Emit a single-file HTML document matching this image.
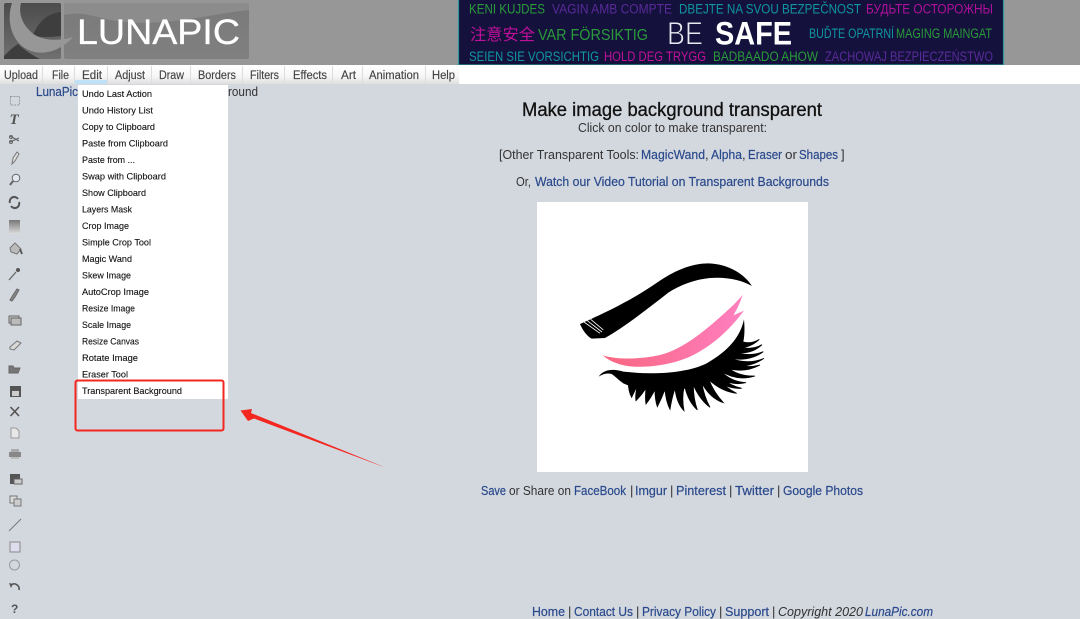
<!DOCTYPE html>
<html><head><meta charset="utf-8"><title>LunaPic</title>
<style>
html,body{margin:0;padding:0;width:1080px;height:619px;overflow:hidden;background:#d3d7de}
svg{display:block;filter:blur(.35px)}
text{font-family:"Liberation Sans","Noto Sans CJK SC",sans-serif}
.m{font-size:11.500px;fill:#444;stroke:#444;stroke-width:.15px}
.d{font-size:9.500px;fill:#111;stroke:#111;stroke-width:.12px}
.b{font-size:13px;fill:#333}
.l{fill:#2a4a8c;stroke:#2a4a8c;stroke-width:.2px}
</style></head><body>
<svg width="1080" height="619" viewBox="0 0 1080 619" xmlns="http://www.w3.org/2000/svg">
<defs>
<linearGradient id="mb" x1="0" y1="0" x2="0" y2="1"><stop offset="0" stop-color="#fff"/><stop offset=".6" stop-color="#f6f6f6"/><stop offset="1" stop-color="#dedede"/></linearGradient>
<linearGradient id="lg" x1="0" y1="0" x2="0" y2="1"><stop offset="0" stop-color="#7a7a7a"/><stop offset="1" stop-color="#808080"/></linearGradient>
<linearGradient id="sq" x1="0" y1="0" x2="0" y2="1"><stop offset="0" stop-color="#4c4c4c"/><stop offset="1" stop-color="#707070"/></linearGradient>
<linearGradient id="grad" x1="0" y1="0" x2="0" y2="1"><stop offset="0" stop-color="#777"/><stop offset=".5" stop-color="#aaa"/><stop offset="1" stop-color="#ddd"/></linearGradient>
<linearGradient id="pk" x1="0" y1="0" x2="1" y2="0"><stop offset="0" stop-color="#f9667f"/><stop offset="1" stop-color="#ff7fc0"/></linearGradient>
</defs>
<rect width="1080" height="619" fill="#d3d7de"/>
<!-- header -->
<rect width="1080" height="65" fill="#979797"/>
<rect x="4" y="3" width="57" height="56" rx="2" fill="url(#sq)"/>
<path d="M61 12C48 13 38 22 33 35C40 38 50 37 61 36Z" fill="#3e3e3e"/>
<path d="M4 56V59H40C30 54 22 48 18 44C13 47 8 52 4 56Z" fill="#3e3e3e"/>
<rect x="64" y="3" width="185" height="56" rx="2" fill="url(#lg)"/>
<path d="M64 15C85 10 100 20 125 22C170 26 210 14 249 10V3H64Z" fill="#8c8c8c"/>
<path d="M12 3C7 18 10 36 22 46C34 56 56 56 73 37C60 41 45 41 35 35C23 27 18 14 21 3Z" fill="#979797"/>
<text x="77" y="44" font-size="35" fill="#fff" stroke="#fff" stroke-width=".3" textLength="163" lengthAdjust="spacingAndGlyphs">LUNAPIC</text>
<!-- banner -->
<rect x="458.500" y="-2" width="545" height="67" fill="#14123c" stroke="#2a9aa0" stroke-width="1.200"/>
<g font-size="13.500">
<text x="469" y="13.500" fill="#2a9a3a" textLength="76" lengthAdjust="spacingAndGlyphs">KENI KUJDES</text>
<text x="552" y="13.500" fill="#5a2a9a" textLength="120" lengthAdjust="spacingAndGlyphs">VAGIN AMB COMPTE</text>
<text x="679" y="13.500" fill="#0f96a0" textLength="182" lengthAdjust="spacingAndGlyphs">DBEJTE NA SVOU BEZPEČNOST</text>
<text x="866" y="13.500" fill="#b0109a" textLength="127" lengthAdjust="spacingAndGlyphs">БУДЬТЕ ОСТОРОЖНЫ</text>
<text x="470" y="40" font-size="16" fill="#c0109a" textLength="65" lengthAdjust="spacingAndGlyphs">注意安全</text>
<text x="538" y="40" font-size="16" fill="#2a9a3a" textLength="110" lengthAdjust="spacingAndGlyphs">VAR FÖRSIKTIG</text>
<text x="667" y="44.500" font-size="32" fill="#e8e8f0" stroke="#14123c" stroke-width=".9" textLength="36" lengthAdjust="spacingAndGlyphs">BE</text>
<text x="715" y="44.500" font-size="32" fill="#fff" font-weight="700" textLength="77" lengthAdjust="spacingAndGlyphs">SAFE</text>
<text x="809" y="38" fill="#0f96a0" textLength="85" lengthAdjust="spacingAndGlyphs">BUĎTE OPATRNÍ</text>
<text x="896" y="38" fill="#2a9a3a" textLength="96" lengthAdjust="spacingAndGlyphs">MAGING MAINGAT</text>
<text x="469" y="61" fill="#0f96a0" textLength="130" lengthAdjust="spacingAndGlyphs">SEIEN SIE VORSICHTIG</text>
<text x="604" y="61" fill="#c0109a" textLength="102" lengthAdjust="spacingAndGlyphs">HOLD DEG TRYGG</text>
<text x="713" y="61" fill="#2a9a3a" textLength="105" lengthAdjust="spacingAndGlyphs">BADBAADO AHOW</text>
<text x="825" y="61" fill="#5a2a9a" textLength="168" lengthAdjust="spacingAndGlyphs">ZACHOWAJ BEZPIECZEŃSTWO</text>
</g>
<!-- menu bar -->
<rect y="65" width="1080" height="19" fill="#fff"/>
<rect x="0" y="66" width="459" height="18" fill="url(#mb)"/>
<rect x="75" y="80" width="32" height="4" fill="#bfe0f5"/>
<g stroke="#ddd" stroke-width="1"><path d="M42.500 66V84M74.500 66V84M107.500 66V84M151.500 66V84M190.500 66V84M242.500 66V84M284.500 66V84M332.500 66V84M362.500 66V84M425.500 66V84"/></g>
<g>
<text class="m" x="4" y="79" textLength="34" lengthAdjust="spacingAndGlyphs">Upload</text>
<text class="m" x="52" y="79" textLength="17" lengthAdjust="spacingAndGlyphs">File</text>
<text class="m" x="82" y="79" textLength="20" lengthAdjust="spacingAndGlyphs">Edit</text>
<text class="m" x="115" y="79" textLength="30" lengthAdjust="spacingAndGlyphs">Adjust</text>
<text class="m" x="159" y="79" textLength="25" lengthAdjust="spacingAndGlyphs">Draw</text>
<text class="m" x="198" y="79" textLength="38" lengthAdjust="spacingAndGlyphs">Borders</text>
<text class="m" x="250" y="79" textLength="29" lengthAdjust="spacingAndGlyphs">Filters</text>
<text class="m" x="293" y="79" textLength="34" lengthAdjust="spacingAndGlyphs">Effects</text>
<text class="m" x="341" y="79" textLength="15" lengthAdjust="spacingAndGlyphs">Art</text>
<text class="m" x="369" y="79" textLength="50" lengthAdjust="spacingAndGlyphs">Animation</text>
<text class="m" x="432" y="79" textLength="23" lengthAdjust="spacingAndGlyphs">Help</text>
</g>
<!-- breadcrumb -->
<text x="36" y="96" font-size="12.500" fill="#2a4a8c" stroke="#2a4a8c" stroke-width=".2" textLength="42" lengthAdjust="spacingAndGlyphs">LunaPic</text>
<text x="228" y="96" font-size="12.500" fill="#333" textLength="30" lengthAdjust="spacingAndGlyphs">round</text>
<!-- dropdown -->
<rect x="78" y="85" width="150" height="314" fill="#fff"/>
<g>
<text class="d" x="82" y="97" textLength="70" lengthAdjust="spacingAndGlyphs">Undo Last Action</text>
<text class="d" x="82" y="113.500" textLength="71" lengthAdjust="spacingAndGlyphs">Undo History List</text>
<text class="d" x="82" y="130" textLength="73" lengthAdjust="spacingAndGlyphs">Copy to Clipboard</text>
<text class="d" x="82" y="146.500" textLength="86" lengthAdjust="spacingAndGlyphs">Paste from Clipboard</text>
<text class="d" x="82" y="163" textLength="53" lengthAdjust="spacingAndGlyphs">Paste from ...</text>
<text class="d" x="82" y="179.500" textLength="84" lengthAdjust="spacingAndGlyphs">Swap with Clipboard</text>
<text class="d" x="82" y="196" textLength="64" lengthAdjust="spacingAndGlyphs">Show Clipboard</text>
<text class="d" x="82" y="212.500" textLength="50" lengthAdjust="spacingAndGlyphs">Layers Mask</text>
<text class="d" x="82" y="229" textLength="47" lengthAdjust="spacingAndGlyphs">Crop Image</text>
<text class="d" x="82" y="245.500" textLength="69" lengthAdjust="spacingAndGlyphs">Simple Crop Tool</text>
<text class="d" x="82" y="262" textLength="50" lengthAdjust="spacingAndGlyphs">Magic Wand</text>
<text class="d" x="82" y="278.500" textLength="49" lengthAdjust="spacingAndGlyphs">Skew Image</text>
<text class="d" x="82" y="295" textLength="67" lengthAdjust="spacingAndGlyphs">AutoCrop Image</text>
<text class="d" x="82" y="311.500" textLength="53" lengthAdjust="spacingAndGlyphs">Resize Image</text>
<text class="d" x="82" y="328" textLength="49" lengthAdjust="spacingAndGlyphs">Scale Image</text>
<text class="d" x="82" y="344.500" textLength="57" lengthAdjust="spacingAndGlyphs">Resize Canvas</text>
<text class="d" x="82" y="361" textLength="56" lengthAdjust="spacingAndGlyphs">Rotate Image</text>
<text class="d" x="82" y="377.500" textLength="46" lengthAdjust="spacingAndGlyphs">Eraser Tool</text>
<text class="d" x="82" y="394" textLength="100" lengthAdjust="spacingAndGlyphs">Transparent Background</text>
</g>
<!-- toolbar icons -->
<g fill="none" stroke="#666" stroke-width="1">
<rect x="10.500" y="96.500" width="9" height="8.500" stroke-dasharray="2 1" stroke="#999"/>
<text x="9.500" y="124" font-size="15" font-style="italic" font-weight="700" fill="#555" stroke="none" style="font-family:'Liberation Serif',serif">T</text>
<path d="M10 136L19 141M10 142L19 138" stroke-width="1.200"/><circle cx="11" cy="137" r="1.500"/><circle cx="11" cy="142" r="1.500"/>
<path d="M12 164L13 158L17 152L19 154L15 161Z" fill="#ddd" stroke="#777"/>
<circle cx="16" cy="178" r="3.800" fill="#e4e8ee" stroke="#666"/><path d="M13 181L10 185" stroke-width="2"/>
<path d="M10 203A4.500 4.500 0 0 1 18 199M19 202A4.500 4.500 0 0 1 11 206" stroke-width="2" stroke="#555"/>
<rect x="9" y="220" width="11" height="14" fill="url(#grad)" stroke="none"/>
<path d="M10 248L15 243L21 249L17 254L11 252Z" fill="#bbb" stroke="#777"/><path d="M20 249L22 254" stroke-width="1.800" stroke="#555"/>
<path d="M9 280L16 272" stroke-width="1.300"/><circle cx="18" cy="270" r="2" fill="#555" stroke="none"/>
<path d="M10 300L13 295L17 289L19 290L15 297L12 301Z" fill="#888" stroke="#666"/>
<rect x="9" y="316" width="10" height="7" fill="#ccc"/><rect x="11" y="318" width="10" height="7" fill="#bbb"/>
<path d="M10 347L17 341L21 343L14 350L10 349Z" fill="#d8d8d8" stroke="#777"/>
<path d="M9 373V366H13L14 368H20L18 373Z" fill="#777" stroke="#666"/>
<rect x="10" y="386" width="11" height="11" fill="#555" stroke="none"/><rect x="12" y="391" width="7" height="5" fill="#ccc" stroke="none"/>
<path d="M10.500 407L19 416M19 407L10.500 416" stroke-width="1.600" stroke="#555"/>
<path d="M11 428H16L19 431V438H11Z" fill="#e8e8e8" stroke="#999"/>
<rect x="9" y="452" width="12" height="5" fill="#888" stroke="none"/><rect x="11" y="449" width="8" height="3" fill="#aaa" stroke="none"/><rect x="11" y="457" width="8" height="2" fill="#bbb" stroke="none"/>
<rect x="10" y="474" width="10" height="10" fill="#555" stroke="none"/><rect x="14" y="479" width="8" height="5" fill="#ccc" stroke="#666"/>
<rect x="10" y="496" width="7" height="7" fill="#ddd" stroke="#777"/><rect x="14" y="499" width="7" height="7" fill="#ccc" stroke="#777"/>
<path d="M9 531L21 519" stroke="#777"/>
<rect x="10" y="542" width="10" height="10" stroke="#888" fill="#dde"/>
<circle cx="14.500" cy="565" r="5" stroke="#999"/>
<path d="M11 585A5 5 0 0 1 19 590" stroke-width="1.600" stroke="#555"/><path d="M9 583L13 584L11 588Z" fill="#555" stroke="none"/>
<text x="11" y="613" font-size="12" font-weight="700" fill="#555" stroke="none">?</text>
</g>
<!-- main text -->
<text x="522" y="116" font-size="19" fill="#111" stroke="#111" stroke-width=".3" textLength="300" lengthAdjust="spacingAndGlyphs">Make image background transparent</text>
<text x="578" y="132" class="b" textLength="189" lengthAdjust="spacingAndGlyphs">Click on color to make transparent:</text>
<text x="499" y="159" class="b" textLength="140" lengthAdjust="spacingAndGlyphs">[Other Transparent Tools:</text>
<text x="641" y="159" class="b l" textLength="64" lengthAdjust="spacingAndGlyphs">MagicWand</text>
<text x="705" y="159" class="b">,</text>
<text x="711" y="159" class="b l" textLength="31" lengthAdjust="spacingAndGlyphs">Alpha</text>
<text x="742" y="159" class="b">,</text>
<text x="748" y="159" class="b l" textLength="34" lengthAdjust="spacingAndGlyphs">Eraser</text>
<text x="785" y="159" class="b" textLength="12" lengthAdjust="spacingAndGlyphs">or</text>
<text x="799" y="159" class="b l" textLength="39" lengthAdjust="spacingAndGlyphs">Shapes</text>
<text x="841" y="159" class="b">]</text>
<text x="516" y="186" class="b" textLength="15" lengthAdjust="spacingAndGlyphs">Or,</text>
<text x="535" y="186" class="b l" textLength="294" lengthAdjust="spacingAndGlyphs">Watch our Video Tutorial on Transparent Backgrounds</text>
<!-- image -->
<rect x="537" y="202" width="271" height="270" fill="#fff"/>
<g transform="translate(560 250) scale(.3333)">
<path d="M60 222C120 195 210 155 300 92C350 58 400 40 445 40C510 42 555 75 576 108C545 90 500 80 450 84C405 88 360 105 325 128C265 175 195 230 135 264L95 266C80 258 68 240 60 222Z" fill="#000"/>
<path d="M72 216L120 250M82 212L126 246M92 208L130 240" stroke="#fff" stroke-width="2.500" fill="none"/>
<path d="M128 316C170 328 230 330 300 315C370 298 440 240 520 165C530 155 540 145 548 134C540 160 530 180 520 196L552 182C520 225 470 280 400 315C340 345 270 352 220 350C185 348 150 335 128 316Z" fill="url(#pk)"/>
<path d="M116 380C130 358 160 355 190 365C280 375 380 370 440 340C500 305 540 265 552 208C556 250 552 280 540 305C520 345 480 375 425 400C380 418 340 424 300 424C260 424 220 414 190 400C175 390 165 378 155 372C140 368 128 372 116 380Z" fill="#000"/>
<path fill="#000" stroke="#000" stroke-width="2.500" d="M520 290Q565 300 598 268Q565 288 532 268ZM515 305Q570 318 606 284Q570 305 525 285ZM510 325Q570 335 610 305Q570 322 520 305ZM500 345Q565 358 612 325Q565 345 510 325ZM492 352Q550 372 600 345Q550 358 505 335ZM480 362Q530 395 585 378Q530 380 495 345ZM465 375Q510 410 558 398Q510 395 480 360ZM455 382Q500 418 545 415Q500 405 470 368ZM445 388Q485 425 530 430Q490 410 462 372ZM425 398Q450 445 490 458Q460 425 445 385ZM400 405Q420 450 450 472Q432 440 425 395ZM375 412Q385 455 412 480Q400 445 400 405ZM345 415Q350 460 372 482Q365 445 372 412ZM315 418Q318 455 330 478Q335 445 345 415ZM285 418Q285 450 292 470Q305 445 315 418ZM258 415Q255 445 258 462Q275 440 285 418ZM232 408Q225 435 228 452Q245 435 258 415ZM205 395Q205 425 215 442Q225 420 232 408Z"/>
</g>
<!-- share -->
<text x="481" y="495" class="b l" textLength="25" lengthAdjust="spacingAndGlyphs">Save</text>
<text x="509" y="495" class="b" textLength="62" lengthAdjust="spacingAndGlyphs">or Share on</text>
<text x="574" y="495" class="b l" textLength="52" lengthAdjust="spacingAndGlyphs">FaceBook</text>
<text x="630" y="495" class="b">|</text>
<text x="635" y="495" class="b l" textLength="32" lengthAdjust="spacingAndGlyphs">Imgur</text>
<text x="670" y="495" class="b">|</text>
<text x="676" y="495" class="b l" textLength="50" lengthAdjust="spacingAndGlyphs">Pinterest</text>
<text x="729" y="495" class="b">|</text>
<text x="735" y="495" class="b l" textLength="39" lengthAdjust="spacingAndGlyphs">Twitter</text>
<text x="777" y="495" class="b">|</text>
<text x="783" y="495" class="b l" textLength="80" lengthAdjust="spacingAndGlyphs">Google Photos</text>
<!-- footer -->
<text x="532" y="616" class="b l" textLength="33" lengthAdjust="spacingAndGlyphs">Home</text>
<text x="568" y="616" class="b">|</text>
<text x="574" y="616" class="b l" textLength="59" lengthAdjust="spacingAndGlyphs">Contact Us</text>
<text x="636" y="616" class="b">|</text>
<text x="642" y="616" class="b l" textLength="74" lengthAdjust="spacingAndGlyphs">Privacy Policy</text>
<text x="719" y="616" class="b">|</text>
<text x="725" y="616" class="b l" textLength="44" lengthAdjust="spacingAndGlyphs">Support</text>
<text x="772" y="616" class="b">|</text>
<text x="778" y="616" class="b" font-style="italic" textLength="85" lengthAdjust="spacingAndGlyphs">Copyright 2020</text>
<text x="865" y="616" class="b l" font-style="italic" textLength="68" lengthAdjust="spacingAndGlyphs">LunaPic.com</text>
<!-- annotation -->
<rect x="75.500" y="380.500" width="148" height="50" rx="2" fill="none" stroke="#f3271f" stroke-width="2"/>
<path d="M240.500 410.500L252 409L251 413L384 467L254 418.500L248 421Z" fill="#f3271f"/>
</svg>
</body></html>
